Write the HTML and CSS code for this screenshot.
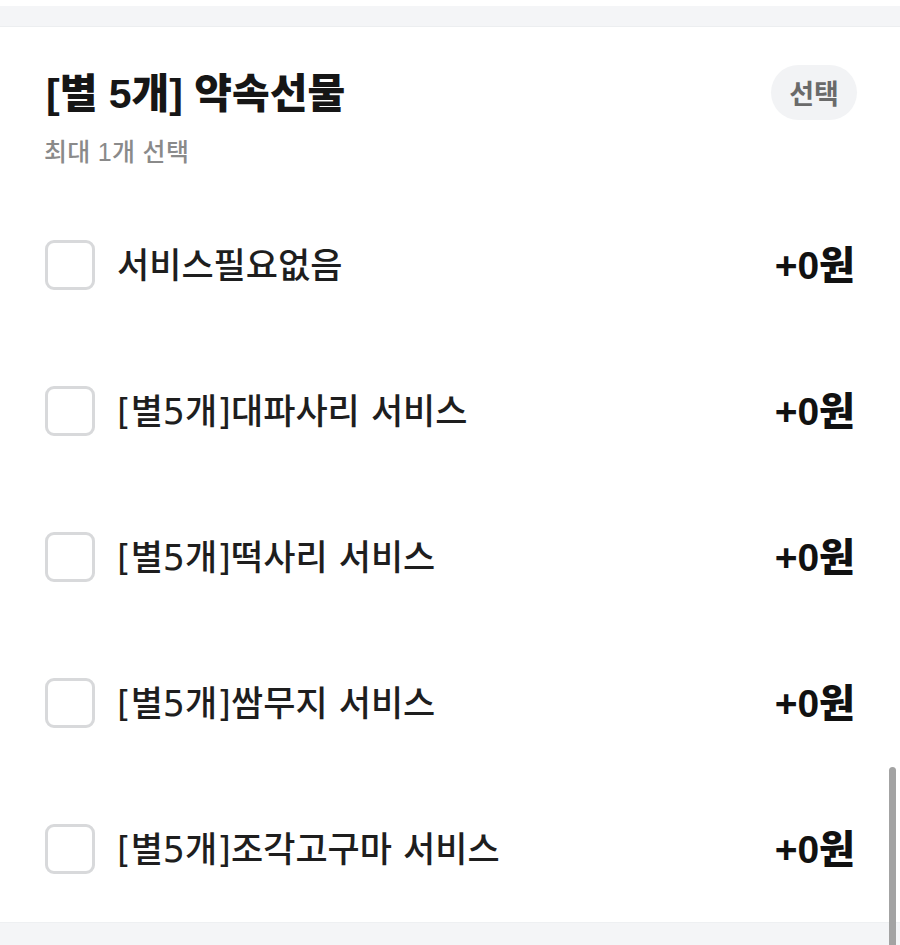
FILE: index.html
```html
<!DOCTYPE html>
<html lang="ko">
<head>
<meta charset="utf-8">
<title>약속선물</title>
<link rel="stylesheet" href="styles.css">
</head>
<body>
<div class="top-gap"></div>
<div class="band"></div>
<section class="option-group">
  <div class="group-head">
    <h2 class="group-title">[별 5개] 약속선물</h2>
    <span class="pill">선택</span>
  </div>
  <p class="group-sub">최대 1개 선택</p>
  <ul class="options">
    <li class="option"><span class="check"></span><span class="label">서비스필요없음</span><span class="price">+0원</span></li>
    <li class="option"><span class="check"></span><span class="label">[별5개]대파사리 서비스</span><span class="price">+0원</span></li>
    <li class="option"><span class="check"></span><span class="label">[별5개]떡사리 서비스</span><span class="price">+0원</span></li>
    <li class="option"><span class="check"></span><span class="label">[별5개]쌈무지 서비스</span><span class="price">+0원</span></li>
    <li class="option"><span class="check"></span><span class="label">[별5개]조각고구마 서비스</span><span class="price">+0원</span></li>
  </ul>
</section>
<div class="band bottom"></div>
<div class="scrollbar"></div>
</body>
</html>
```
FILE: styles.css
```css
html, body {
  margin: 0;
  padding: 0;
  background: #ffffff;
  height: 945px;
  overflow: hidden;
}
body {
  font-family: "Liberation Sans", "Noto Sans CJK KR", sans-serif;
  color: #1c1c1c;
  position: relative;
}
.top-gap {
  height: 6px;
}
.band {
  height: 20px;
  background: #f4f5f7;
  border-bottom: 1px solid #eceef0;
}
.band.bottom {
  height: 30px;
  border-bottom: none;
  border-top: 1px solid #eef0f2;
}
.option-group {
  padding: 37px 45px 0 45px;
}
.group-head {
  height: 56px;
  display: flex;
  align-items: center;
  justify-content: space-between;
}
.group-title {
  margin: 0 0 0 1px;
  font-size: 41px;
  font-weight: 800;
  letter-spacing: 0;
  line-height: 56px;
  color: #161616;
  padding-top: 3px;
}
.pill {
  width: 86px;
  height: 55px;
  margin-right: -2px;
  border-radius: 28px;
  background: #f2f3f5;
  color: #6a6a6a;
  font-size: 27px;
  font-weight: 700;
  display: flex;
  align-items: center;
  justify-content: center;
}
.group-sub {
  margin: 16px 0 0 -1px;
  font-size: 25px;
  line-height: 32px;
  letter-spacing: 0.3px;
  color: #8a8a8a;
  font-weight: 500;
}
.options {
  list-style: none;
  margin: 24px 0 0 0;
  padding: 0;
}
.option {
  height: 146px;
  display: flex;
  align-items: center;
}
.check {
  width: 44px;
  height: 44px;
  border: 3px solid #d8d9db;
  border-radius: 9px;
  flex: none;
}
.label {
  margin: 0 0 6px 22px;
  font-family: "DejaVu Sans", "Noto Sans CJK KR", sans-serif;
  font-size: 35px;
  font-weight: 500;
  letter-spacing: 0;
  color: #1e1e1e;
  flex: 1;
}
.price {
  margin-bottom: 6px;
  font-size: 39px;
  font-weight: 800;
  color: #111111;
  letter-spacing: 0;
}
.scrollbar {
  position: absolute;
  left: 889px;
  top: 767px;
  width: 7px;
  height: 190px;
  border-radius: 4px;
  background: #a3a3a3;
}
```
